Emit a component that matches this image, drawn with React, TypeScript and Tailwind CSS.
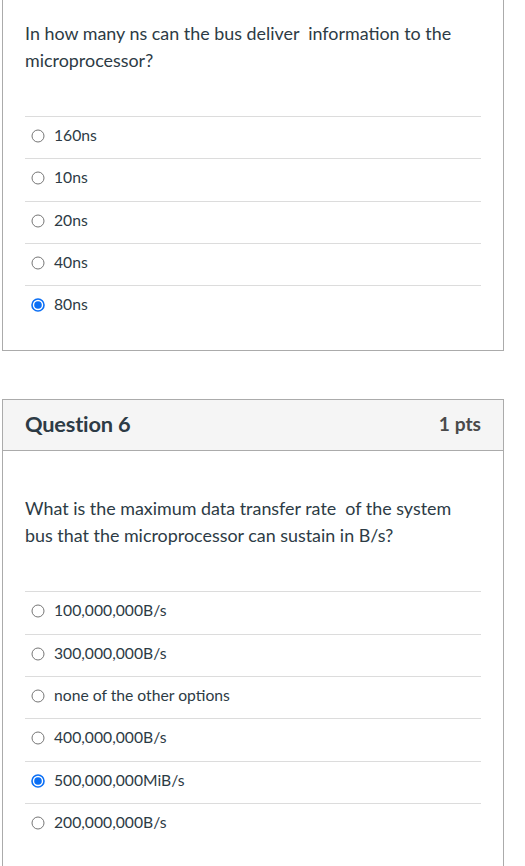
import React from 'react';

const Radio = ({ checked }: { checked?: boolean }) =>
  checked ? (
    <svg className="w-[14px] h-[14px] shrink-0" viewBox="0 0 14 14">
      <circle cx="7" cy="7" r="6" fill="white" stroke="#0b6ff5" strokeWidth="1.6" />
      <circle cx="7" cy="7" r="3.8" fill="#0b6ff5" />
    </svg>
  ) : (
    <svg className="w-[14px] h-[14px] shrink-0" viewBox="0 0 14 14">
      <circle cx="7" cy="7" r="6" fill="white" stroke="#767676" strokeWidth="1" />
    </svg>
  );

const Option = ({ label, checked }: { label: string; checked?: boolean }) => (
  <div className="border-t border-[#dcdcdc] h-[42.3px] pt-[8px] flex items-start leading-[20px]">
    <span className="ml-[6px] mr-[9px] h-[22px] flex items-center">
      <Radio checked={checked} />
    </span>
    <span className="text-[15.7px] text-[#2d3b45]">{label}</span>
  </div>
);

export default function App() {
  return (
    <div className="w-[525px] bg-white min-h-[866px] font-['Lato','Open_Sans',sans-serif] text-[#2d3b45]">
      {/* Question 5 (top cut off) */}
      <div className="ml-[2px] w-[502px] border-x border-b border-[#ababab]">
        <div className="px-[22px] pt-[20px] pb-[23px]">
          <p className="text-[17.9px] leading-[27px] pr-2">
            In how many ns can the bus deliver&nbsp; information to the microprocessor?
          </p>
          <div className="mt-[42px]">
            <Option label="160ns" />
            <Option label="10ns" />
            <Option label="20ns" />
            <Option label="40ns" />
            <Option label="80ns" checked />
          </div>
        </div>
      </div>

      {/* Question 6 */}
      <div className="ml-[2px] w-[502px] mt-[48px] border border-[#ababab] border-b-0">
        <div className="h-[51px] bg-[#f5f5f5] border-b border-[#ababab] px-[22px] pb-[3px] flex items-center justify-between">
          <span className="text-[21.8px] font-bold tracking-[-0.2px]">Question 6</span>
          <span className="text-[19.2px] font-bold text-[#4a4a4a]">1 pts</span>
        </div>
        <div className="px-[22px] pt-[44px] pb-[30px]">
          <p className="text-[17.9px] leading-[27px] pr-2">
            What is the maximum data transfer rate&nbsp; of the system bus that the microprocessor can sustain in B/s?
          </p>
          <div className="mt-[42px]">
            <Option label="100,000,000B/s" />
            <Option label="300,000,000B/s" />
            <Option label="none of the other options" />
            <Option label="400,000,000B/s" />
            <Option label="500,000,000MiB/s" checked />
            <Option label="200,000,000B/s" />
          </div>
        </div>
      </div>
    </div>
  );
}
